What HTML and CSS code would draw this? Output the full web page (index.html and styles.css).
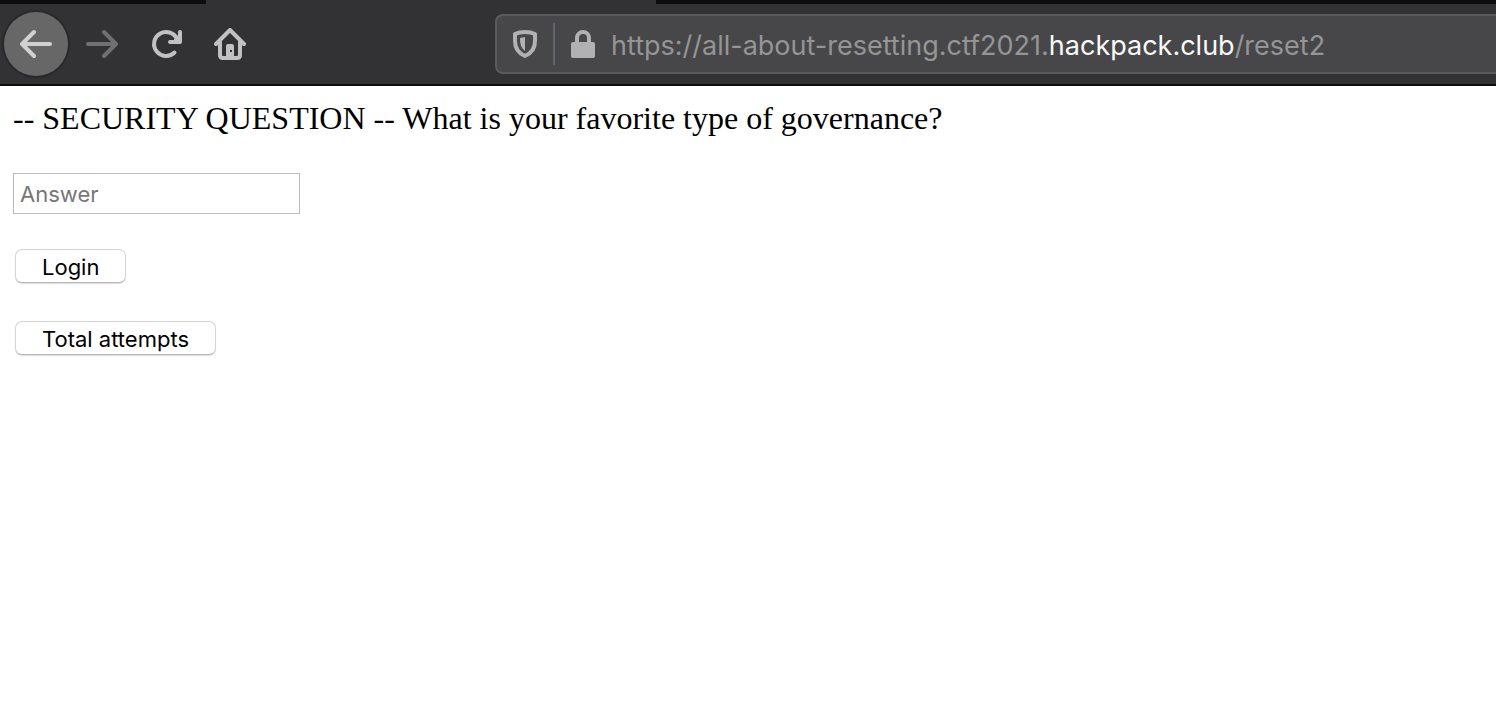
FILE: index.html
```html
<!DOCTYPE html>
<html lang="en">
<head>
<meta charset="utf-8">
<meta name="viewport" content="width=device-width, initial-scale=1">
<title>Reset password</title>
<link rel="stylesheet" href="styles.css">
</head>
<body>
<header class="chrome">
  <div class="tab-strip"><div class="tab-active"></div></div>
  <div class="toolbar">
    <nav class="nav-buttons" aria-label="Browser navigation">
      <button class="nav-button nav-back" type="button" aria-label="Back">
        <svg class="icon" viewBox="0 0 32 32"><path d="M14 4 2 16l12 12M2 16h28"/></svg>
      </button>
      <button class="nav-button nav-forward" type="button" aria-label="Forward" disabled>
        <svg class="icon" viewBox="0 0 32 32"><path d="M18 4l12 12-12 12M30 16H2"/></svg>
      </button>
      <button class="nav-button" type="button" aria-label="Reload">
        <svg class="icon" viewBox="0 0 32 32"><path d="M24.500 24.500A12 12 0 1 1 27 11"/><path d="M30 4v10H20"/><path class="solid" d="M30 5v9h-8l4-5z"/></svg>
      </button>
      <button class="nav-button" type="button" aria-label="Home">
        <svg class="icon" viewBox="0 0 32 32"><path d="M2 16 16 2l14 14"/><path d="M6 14v13q0 3 3 3h14q3 0 3-3V14"/><path class="solid" fill-rule="evenodd" d="M12 30V18q0-2 2-2h4q2 0 2 2v12zM16 22v2h2v-2z"/></svg>
      </button>
    </nav>
    <div class="address-bar">
      <svg class="shield" viewBox="0 0 24 28" aria-hidden="true"><path class="shield-outline" d="M12 2Q18 2 22 4v7c0 7-3 12-10 15C5 23 2 18 2 11V4Q6 2 12 2z"/><path class="solid" d="M12 7v14c-4-3-5-7-5-13z"/></svg>
      <span class="divider"></span>
      <svg class="lock" viewBox="0 0 24 28" aria-hidden="true"><path class="lock-shackle" d="M6 13V8a6 6 0 0 1 12 0v5"/><rect class="solid" y="12" width="24" height="16" rx="2"/></svg>
      <div class="url" role="textbox" contenteditable="true" spellcheck="false" aria-label="Address">https://all-about-resetting.ctf2021.<span class="domain">hackpack.club</span>/reset2</div>
    </div>
  </div>
</header>
<main class="page">
  <form class="reset-form">
    <label class="question" for="answer">-- SECURITY QUESTION -- What is your favorite type of governance?</label>
    <input class="answer" id="answer" type="text" placeholder="Answer">
    <button class="action" type="button">Login</button>
    <button class="action" type="button">Total attempts</button>
  </form>
</main>
</body>
</html>
```

FILE: styles.css
```css
* {
  box-sizing: border-box;
}

body {
  margin: 0;
  background: #fff;
  color: #000;
  font-family: "Liberation Serif", "Times New Roman", serif;
}

.chrome {
  background: #323234;
  border-bottom: 2px solid #0c0c0d;
  overflow: hidden;
}

.tab-strip {
  height: 4px;
  padding-left: 206px;
  background: #0c0c0d;
}

.tab-active {
  width: 450px;
  height: 100%;
  background: #323234;
}

.toolbar {
  display: flex;
  align-items: center;
  gap: 235px;
  height: 80px;
  padding-left: 4px;
}

.nav-buttons {
  display: flex;
  flex: none;
  gap: 2px;
}

.nav-button {
  display: grid;
  place-items: center;
  width: 64px;
  height: 64px;
  padding: 0;
  border: 0;
  border-radius: 50%;
  background: none;
  color: #c1c1c2;
}

.nav-button + .nav-button {
  margin-right: -2px;
}

.nav-back {
  background: #676767;
  box-shadow: 0 0 0 2px #29292b;
  color: #d1d1d1;
}

.nav-forward {
  color: #707071;
}

.icon {
  width: 32px;
  height: 32px;
  fill: none;
  stroke: currentColor;
  stroke-width: 4;
  stroke-linecap: round;
  stroke-linejoin: round;
}

.icon .solid,
.solid {
  fill: currentColor;
  stroke: none;
}

.address-bar {
  display: flex;
  flex: 1;
  align-items: center;
  min-width: 0;
  height: 60px;
  padding-left: 16px;
  border: 2px solid #5b5b5d;
  border-right: 0;
  border-radius: 8px 0 0 8px;
  background: #474749;
  color: #b1b1b3;
}

.shield,
.lock {
  flex: none;
  width: 24px;
  height: 28px;
}

.shield-outline,
.lock-shackle {
  fill: none;
  stroke: currentColor;
  stroke-width: 4;
  stroke-linejoin: round;
}

.divider {
  width: 2px;
  height: 42px;
  margin: 0 16px;
  background: #5f6670;
}

.url {
  flex: 1;
  margin-left: 16px;
  padding-top: 3px;
  overflow: hidden;
  outline: 0;
  color: #959596;
  font: 27px/36px Inter, sans-serif;
  font-variant-ligatures: none;
  white-space: nowrap;
}

.domain {
  color: #f9f9fa;
}

.page {
  padding: 14px 13px;
}

.reset-form {
  display: flex;
  flex-direction: column;
  align-items: flex-start;
}

.question {
  font-size: 32px;
  line-height: 37px;
}

.answer {
  width: 287px;
  height: 41px;
  margin: 36px 0 35px;
  padding: 0 6px;
  border: 1px solid #bbb;
  border-radius: 0;
  background: #fff;
  color: #000;
  font: 22px/28px Inter, sans-serif;
}

.answer::placeholder {
  color: #777;
  opacity: 1;
}

.action {
  height: 34px;
  margin: 0 2px 38px;
  padding: 2px 26px 0;
  border: 1px solid #d4d4d4;
  border-bottom-color: #b8b8b8;
  border-radius: 7px;
  background: #fff;
  box-shadow: 0 1px 1px #ddd;
  color: #000;
  font: 22px/28px Inter, sans-serif;
  font-variant-ligatures: none;
}
```
